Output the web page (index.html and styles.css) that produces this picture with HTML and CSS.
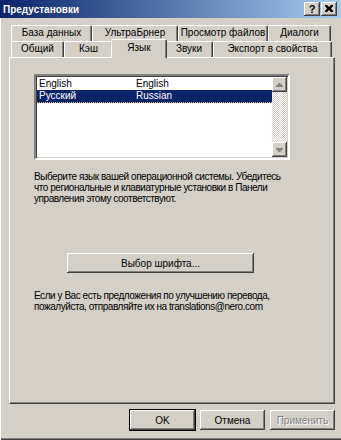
FILE: index.html
```html
<!DOCTYPE html>
<html>
<head>
<meta charset="utf-8">
<link rel="stylesheet" href="styles.css">
</head>
<body>
<div class="window">
  <div class="titlebar">
    <span class="title">Предустановки</span>
    <div class="caption-btns">
      <span class="cbtn help">?</span>
      <span class="cbtn close"><svg width="8" height="7" viewBox="0 0 8 7"><path d="M0 0h2l2 2 2-2h2v1l-2 2.5 2 2.5v1h-2l-2-2-2 2h-2v-1l2-2.5-2-2.5z" fill="#000"/></svg></span>
    </div>
  </div>
  <div class="tabs">
    <div class="tabrow back">
      <div class="tab w-db">База данных</div>
      <div class="tab w-ub">УльтраБрнер</div>
      <div class="tab w-pf">Просмотр файлов</div>
      <div class="tab w-dl">Диалоги</div>
    </div>
    <div class="tabrow front">
      <div class="tab w-ob">Общий</div>
      <div class="tab w-ks">Кэш</div>
      <div class="tab w-yz active">Язык</div>
      <div class="tab w-zv">Звуки</div>
      <div class="tab w-ex">Экспорт в свойства</div>
    </div>
  </div>
  <div class="panel">
    <div class="listbox">
      <div class="list">
        <div class="row"><span class="c1">English</span><span class="c2">English</span></div>
        <div class="row sel"><span class="c1">Русский</span><span class="c2">Russian</span></div>
      </div>
      <div class="vscroll">
        <div class="sbtn up"><svg width="7" height="4" viewBox="0 0 7 4"><path d="M3 0h1l3 3v1h-7v-1z" fill="#808080"/></svg></div>
        <div class="track"></div>
        <div class="sbtn down"><svg width="7" height="4" viewBox="0 0 7 4"><path d="M0 0h7v1l-3 3h-1l-3-3z" fill="#808080"/></svg></div>
      </div>
    </div>
    <p class="info first">Выберите язык вашей операционной системы. Убедитесь что региональные и клавиатурные установки в Панели управления этому соответствуют.</p>
    <button class="btn font-btn">Выбор шрифта...</button>
    <p class="info second">Если у Вас есть предложения по улучшению перевода, пожалуйста, отправляйте их на translations@nero.com</p>
  </div>
  <div class="actions">
    <button class="btn default">OK</button>
    <button class="btn">Отмена</button>
    <button class="btn disabled">Применить</button>
  </div>
</div>
</body>
</html>
```
FILE: styles.css
```css
* { box-sizing: border-box; }
html, body { margin: 0; padding: 0; background: #d4d0c8; }
body {
  font-family: "Liberation Sans", Arial, sans-serif;
  font-size: 10px;
  color: #000;
}
.window {
  width: 341px;
  height: 440px;
  background: #d4d0c8;
  box-shadow: inset 1px 0 #ffffff, inset 0 -1px #404040, inset 0 -2px #808080;
  display: flex;
  flex-direction: column;
}
.titlebar {
  height: 18px;
  flex: none;
  background: linear-gradient(to right, #0a246a, #a6caf0);
  display: flex;
  align-items: center;
  justify-content: space-between;
  padding: 0 4px 0 3px;
}
.title {
  color: #fff;
  font-weight: bold;
  font-size: 10px;
  letter-spacing: 0;
}
.caption-btns { display: flex; gap: 1px; }
.cbtn {
  width: 16px;
  height: 14px;
  background: #d4d0c8;
  box-shadow: inset -1px -1px #404040, inset 1px 1px #ffffff, inset -2px -2px #808080;
  display: flex;
  align-items: center;
  justify-content: center;
  font-weight: bold;
  font-size: 11px;
  line-height: 14px;
  padding-bottom: 1px;
}
.tabs {
  margin: 7px 0 0 11px;
  height: 32px;
  flex: none;
}
.tabrow { display: flex; height: 16px; }
.tab {
  height: 16px;
  border-top: 1px solid #ffffff;
  border-left: 1px solid #ffffff;
  border-right: 1px solid #404040;
  border-radius: 2px 2px 0 0;
  box-shadow: inset -1px 0 #808080;
  text-align: center;
  line-height: 14px;
  white-space: nowrap;
  background: #d4d0c8;
}
.w-db { width: 81px; }
.w-ub { width: 86px; }
.w-pf { width: 90px; }
.w-dl { width: 63px; }
.w-ob { width: 53px; }
.w-ks { width: 49px; }
.w-yz { width: 56px; }
.w-zv { width: 48px; }
.w-ex { width: 119px; }
.tab.active {
  height: 19px;
  margin: -2px -2px 0 -2px;
  position: relative;
  z-index: 2;
  line-height: 15px;
}
.panel {
  margin-left: 9px;
  width: 326px;
  height: 347px;
  flex: none;
  border-top: 1px solid #ffffff;
  border-left: 1px solid #ffffff;
  border-right: 1px solid #404040;
  border-bottom: 1px solid #404040;
  box-shadow: inset -1px -1px #808080;
  padding: 16px 0 0 24px;
}
.listbox {
  width: 256px;
  height: 86px;
  background: #fff;
  border: 2px solid;
  border-color: #808080 #ffffff #ffffff #808080;
  box-shadow: inset 1px 1px #404040, inset -1px -1px #d4d0c8;
  display: flex;
}
.list { flex: 1; padding-top: 1px; padding-left: 1px; }
.row { height: 13px; line-height: 13px; display: flex; font-size: 10px; }
.row .c1 { width: 99px; padding-left: 2px; }
.row .c2 { flex: 1; }
.row.sel {
  background: #0a246a;
  color: #fff;
  border-bottom: 1px dotted #e8c060;
  line-height: 12px;
}
.vscroll {
  width: 15px;
  margin: 1px 1px 1px 0;
  display: flex;
  flex-direction: column;
}
.sbtn {
  height: 15px;
  flex: none;
  background: #d4d0c8;
  box-shadow: inset -1px -1px #404040, inset 1px 1px #ffffff, inset -2px -2px #808080;
  display: flex;
  align-items: center;
  justify-content: center;
}
.track {
  flex: 1;
  background-color: #ffffff;
  background-image:
    linear-gradient(45deg, #d4d0c8 25%, transparent 25%, transparent 75%, #d4d0c8 75%),
    linear-gradient(45deg, #d4d0c8 25%, transparent 25%, transparent 75%, #d4d0c8 75%);
  background-size: 2px 2px;
  background-position: 0 0, 1px 1px;
}
.info {
  margin: 0;
  width: 258px;
  font-size: 10px;
  line-height: 11px;
  letter-spacing: -0.45px;
}
.info.first { margin-top: 11px; }
.btn {
  font-family: "Liberation Sans", Arial, sans-serif;
  font-size: 10px;
  color: #000;
  background: #d4d0c8;
  border: none;
  padding: 0;
  box-shadow: inset -1px -1px #404040, inset 1px 1px #ffffff, inset -2px -2px #808080;
  display: flex;
  align-items: center;
  justify-content: center;
}
.font-btn {
  width: 187px;
  height: 20px;
  margin: 49px 0 0 33px;
}
.info.second { margin-top: 17px; }
.actions {
  display: flex;
  justify-content: flex-end;
  gap: 5px;
  padding: 6px 6px 0 0;
}
.actions .btn { width: 65px; height: 20px; }
.btn.default {
  box-shadow: 0 0 0 1px #000, inset -1px -1px #404040, inset 1px 1px #ffffff, inset -2px -2px #808080;
}
.btn.disabled {
  color: #808080;
  text-shadow: 1px 1px #ffffff;
}
```
